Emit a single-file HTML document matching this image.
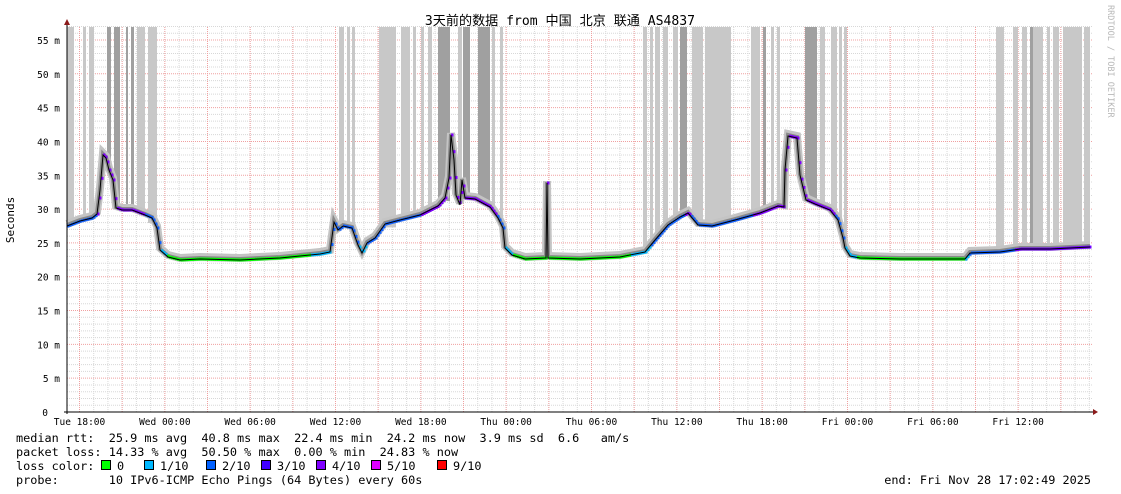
<!DOCTYPE html>
<html><head><meta charset="utf-8">
<style>
html,body{margin:0;padding:0;background:#fff;width:1121px;height:494px;overflow:hidden}
svg{display:block}
text{font-family:"DejaVu Sans Mono","Liberation Mono","Noto Sans CJK SC",monospace}
</style></head>
<body>
<svg id="g" width="1121" height="494" xmlns="http://www.w3.org/2000/svg">
<rect width="1121" height="494" fill="#fff"/>
<g id="grid"></g>
<g id="bars"></g>
<g id="curve"></g>
<g id="axes"></g>
<text x="560" y="25" font-size="13.1" text-anchor="middle" fill="#000">3天前的数据 from 中国 北京 联通 AS4837</text>
<text transform="translate(14,220) rotate(-90)" font-size="11" text-anchor="middle" fill="#000">Seconds</text>
<text transform="translate(1108,5) rotate(90)" font-size="8.5" fill="#b8b8b8">RRDTOOL / TOBI OETIKER</text>
<g font-size="11.85" fill="#000">
<text x="16" y="442" xml:space="preserve">median rtt:  25.9 ms avg  40.8 ms max  22.4 ms min  24.2 ms now  3.9 ms sd  6.6   am/s</text>
<text x="16" y="456" xml:space="preserve">packet loss: 14.33 % avg  50.50 % max  0.00 % min  24.83 % now</text>
<text x="16" y="470" xml:space="preserve">loss color:  </text>
<text x="16" y="484" xml:space="preserve">probe:       10 IPv6-ICMP Echo Pings (64 Bytes) every 60s</text>
<text x="1091" y="484" text-anchor="end">end: Fri Nov 28 17:02:49 2025</text>
</g>
<g id="legend"></g>
</svg>
<script>
var NS="http://www.w3.org/2000/svg";
function el(p,t,a,txt){var e=document.createElementNS(NS,t);for(var k in a)e.setAttribute(k,a[k]);if(txt!=null)e.textContent=txt;document.getElementById(p).appendChild(e);return e;}
var X0=67,X1=1092,Y0=412,YT=27,S=33.82/5;
for(var v=1;v<=57;v++){if(v%5==0)continue;var y=Y0-v*S;el("grid","line",{x1:X0,x2:X1,y1:y,y2:y,stroke:"#d8d8d8","stroke-width":1,"stroke-dasharray":"1,1"});}
for(var x=79.5;x<X1;x+=14.222){el("grid","line",{x1:x,x2:x,y1:YT,y2:Y0,stroke:"#d8d8d8","stroke-dasharray":"1,1"});}
for(var x=79.5-14.222;x>X0;x-=14.222){el("grid","line",{x1:x,x2:x,y1:YT,y2:Y0,stroke:"#d8d8d8","stroke-dasharray":"1,1"});}
for(var v=5;v<=55;v+=5){var y=Y0-v*S;el("grid","line",{x1:X0,x2:X1,y1:y,y2:y,stroke:"#f0a0a0","stroke-dasharray":"1,1"});
 el("grid","text",{x:60,y:y+4,"font-size":"9.5","text-anchor":"end",fill:"#000"},v+" m");}
el("grid","text",{x:48,y:Y0+4,"font-size":"9.5","text-anchor":"end",fill:"#000"},"0");
for(var x=79.5;x<X1;x+=42.667){el("grid","line",{x1:x,x2:x,y1:YT,y2:Y0,stroke:"#f0a0a0","stroke-dasharray":"1,1"});}
var labs=["Tue 18:00","Wed 00:00","Wed 06:00","Wed 12:00","Wed 18:00","Thu 00:00","Thu 06:00","Thu 12:00","Thu 18:00","Fri 00:00","Fri 06:00","Fri 12:00"];
for(var i=0;i<labs.length;i++){el("grid","text",{x:79.5+i*85.333,y:425,"font-size":"9.5","text-anchor":"middle",fill:"#000"},labs[i]);}
var P=[[67,226],[80,221],[92,218],[97,214],[100,190],[103,155],[106,158],[109,170],[113,180],[116,208],[122,210],[132,210],[145,215],[152,218],[157,228],[160,250],[168,257],[180,260],[200,259],[240,260],[280,258],[320,254],[330,252],[334,222],[338,230],[343,226],[352,228],[358,245],[362,253],[367,243],[375,238],[385,224],[400,220],[420,215],[438,206],[445,198],[449,178],[451,135],[454,160],[456,195],[460,205],[462,180],[465,198],[475,199],[490,207],[498,218],[503,228],[505,248],[512,255],[525,259],[546,258],[547,183],[548,258],[580,259],[620,257],[645,252],[655,240],[668,225],[680,217],[688,213],[698,225],[712,226],[735,220],[760,213],[778,206],[784,207],[785,170],[788,136],[797,138],[800,175],[806,200],[815,204],[830,210],[838,220],[843,238],[845,248],[850,256],[860,258],[900,259],[930,259],[965,259],[970,253],[1000,252],[1020,249],[1050,249],[1070,248],[1090,247]];
function cy(x){for(var i=1;i<P.length;i++){if(P[i][0]>=x){var a=P[i-1],b=P[i];return a[1]+(b[1]-a[1])*(x-a[0])/Math.max(1,(b[0]-a[0]));}}return P[P.length-1][1];}
var light=[[67,74],[83,86],[89,94],[137,145],[148,157],[339,344],[347,350],[352,355],[379,396],[401,410],[413,416],[421,424],[428,432],[458,462],[492,495],[500,503],[643,647],[650,653],[655,660],[663,668],[673,678],[692,703],[705,720],[700,703],[708,714],[717,731],[751,760],[771,774],[777,780],[820,825],[831,837],[839,842],[844,847],[996,1004],[1013,1018],[1022,1027],[1033,1043],[1047,1050],[1053,1059],[1063,1082],[1084,1090]];
var dark=[[107,111],[114,120],[126,128],[131,134],[438,450],[463,470],[478,490],[680,687],[763,766],[805,817],[1030,1033]];
function bars(list,fill){list.forEach(function(r){var m=0;for(var x=r[0];x<=r[1];x++)m=Math.max(m,cy(x));el("bars","rect",{x:r[0],y:YT,width:r[1]-r[0],height:Math.max(0,m-5-YT),fill:fill});});}
bars(light,"#c8c8c8");bars(dark,"#a0a0a0");
var d="M"+P.map(function(p){return p[0]+","+p[1]}).join(" L");
el("curve","path",{d:d,fill:"none",stroke:"#c4c4c4","stroke-width":8,"stroke-linejoin":"miter",transform:"translate(0,-2)"});
el("curve","path",{d:d,fill:"none",stroke:"#8a8a8a","stroke-width":4,"stroke-linejoin":"miter",transform:"translate(0,-1)"});
function col(x,y){if(y<215)return "#8000ff";if(x>160&&x<330&&y>255)return "#00ff00";if(x>505&&x<650&&y>255)return "#00ff00";if(x>855&&x<965)return "#00ff00";if(x>968)return y>250?"#1060ff":"#7000ff";return y>245?"#00b8ff":"#1060ff";}
for(var x=67;x<1090;x+=2){var y=cy(x);if(x==546)continue;el("curve","rect",{x:x,y:y-1.5,width:2.5,height:3,fill:col(x,y)});}
el("curve","path",{d:d,fill:"none",stroke:"#000","stroke-width":1});
el("axes","line",{x1:X0,x2:X0,y1:24,y2:Y0+2,stroke:"#000"});
el("axes","line",{x1:X0-3,x2:1094,y1:Y0,y2:Y0,stroke:"#000"});
el("axes","path",{d:"M64,25 L70,25 L67,19 Z",fill:"#8b1a1a"});
el("axes","path",{d:"M1093,409 L1093,415 L1098,412 Z",fill:"#8b1a1a"});
var lc=[["#00ff00","0"],["#00b8ff","1/10"],["#0060ff","2/10"],["#4000ff","3/10"],["#8000ff","4/10"],["#e000ff","5/10"],["#ff0000","9/10"]];
var lx=[101,144,206,261,316,371,437];
lc.forEach(function(c,i){el("legend","rect",{x:lx[i]+0.5,y:460.5,width:9,height:9,fill:c[0],stroke:"#000"});el("legend","text",{x:lx[i]+16,y:470,"font-size":"11.85",fill:"#000"},c[1]);});
</script>
</body></html>
